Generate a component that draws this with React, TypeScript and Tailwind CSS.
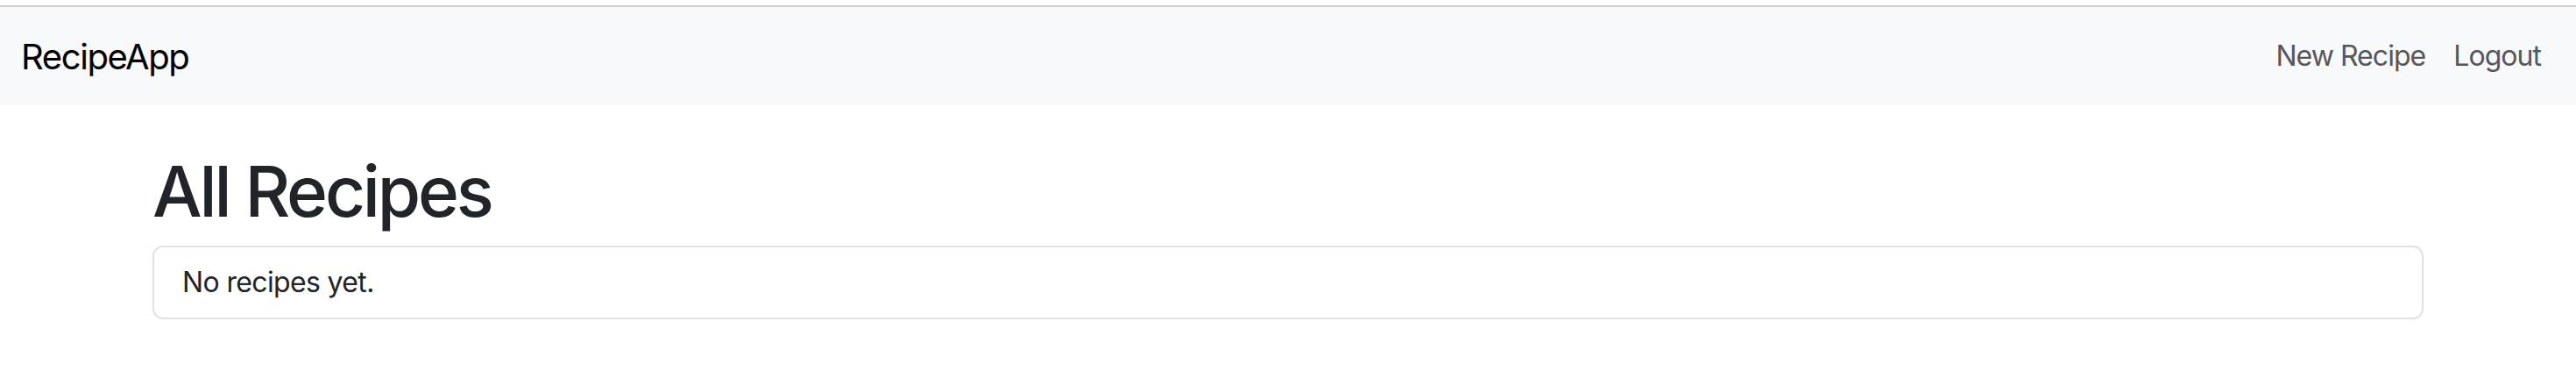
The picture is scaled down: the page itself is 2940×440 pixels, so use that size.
export default function App() {
  return (
    <div className="min-h-[440px] bg-white text-[#212529]" style={{ fontFamily: 'Inter, "Noto Sans", sans-serif' }}>
      <div className="h-[6px] bg-white" />
      <div className="h-[2px] bg-[#cfcfcf]" />
      <nav className="flex h-[112px] items-center justify-between bg-[#f8f9fa] px-[24px]">
        <a className="pt-[11px] pb-[9px] text-[40px] leading-[60px] tracking-[-0.035em] text-black">RecipeApp</a>
        <div className="flex items-center">
          <a className="px-[16px] text-[32px] leading-[48px] tracking-[-0.03em] text-[#575757]">New Recipe</a>
          <a className="pl-[16px] pr-[16px] text-[32px] leading-[48px] tracking-[-0.03em] text-[#575757]">Logout</a>
        </div>
      </nav>
      <main className="mx-auto mt-[48px] w-[2640px] px-[24px]">
        <h1 className="mb-[14px] pt-[2px] text-[80px] font-medium leading-[96px] tracking-[-0.04em]">All Recipes</h1>
        <div className="rounded-[12px] border-2 border-[#dee2e6] px-[32px] py-[16px] text-[32px] leading-[48px] tracking-[-0.02em]">
          No recipes yet.
        </div>
      </main>
    </div>
  );
}
